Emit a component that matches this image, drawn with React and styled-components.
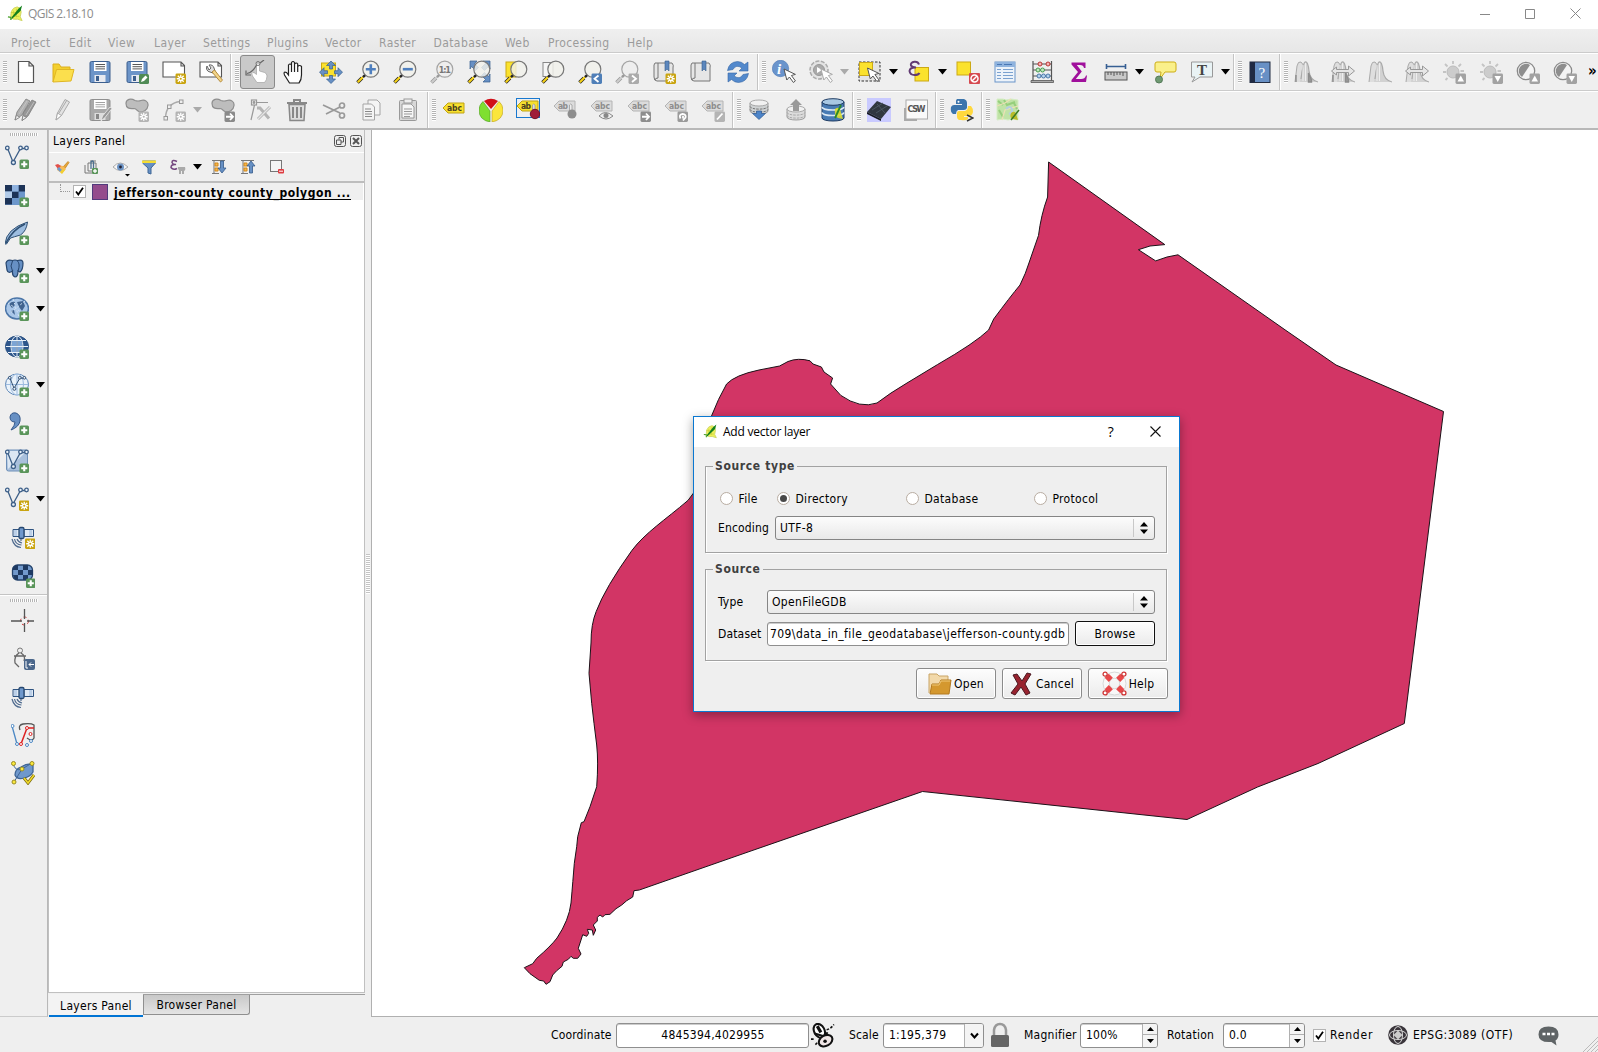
import React from 'react';
import styled, { createGlobalStyle, css } from 'styled-components';

const ui = "'DejaVu Sans Condensed', 'DejaVu Sans', sans-serif";
const caption = "'Open Sans', 'Noto Sans', sans-serif";

const Global = createGlobalStyle`
  * { box-sizing: border-box; }
  html, body { margin: 0; padding: 0; overflow: hidden; }
  body { background: #efefef; font-family: ${ui}; font-stretch: condensed; font-size: 12px; color: #000; }
`;

const Window = styled.div`
  width: 1598px; height: 1052px; display: flex; flex-direction: column;
  background: #efefef; position: relative; overflow: hidden; white-space: nowrap;
`;
const TitleBar = styled.header`
  height: 29px; flex: none; background: #fff; display: flex; align-items: center; padding: 0 17px 2px 7px;
  font: 12px ${caption}; color: #8c8c8c;
`;
const TitleText = styled.span`margin-left: 4px; flex: 1; letter-spacing: -0.55px;`;
const WindowButtons = styled.div`display: flex; gap: 35px; align-items: center;`;
const MenuBar = styled.nav`
  height: 24px; flex: none; display: flex; padding: 4px 0 0 11px; align-items: center;
  background: linear-gradient(#efefef, #e7e7e7); border-bottom: 1px solid #cbcbcb;
  color: #9b9b9b; letter-spacing: 0.4px;
`;
const MenuItem = styled.span`width: ${p => p.$w}px; flex: none;`;
const ToolRow = styled.div`
  height: ${p => p.$h || 38}px; flex: none; display: flex; border-top: 1px solid #fff;
  border-bottom: ${p => (p.$last ? 2 : 1)}px solid ${p => (p.$last ? '#b8b8b8' : '#cbcbcb')};
`;
const ToolGroup = styled.div`
  display: flex; align-items: center; flex: none; height: 100%;
  ${p => p.$sep && css`border-left: 1px solid #c4c4c4; box-shadow: inset 1px 0 #fff;`}
`;
const Handle = styled.i`
  width: 4px; height: 22px; margin: 0 ${p => (p.$first ? '0.5px 0 3px' : '0 0 4px')}; flex: none;
  background: repeating-linear-gradient(#b4b4b4 0 1px, #fff 1px 2px);
`;
const ToolButton = styled.button`
  width: 37px; height: 36px; padding: 0; border: 0; background: none; flex: none;
  display: grid; place-items: center;
  svg { display: block; }
  ${p => p.$on && css`
    width: 35px; height: 34px; margin: 0 1px; border: 1px solid #8a8a8a; border-radius: 3px; background: #c9c9c9;
  `}
`;
const ArrowBox = styled.span`width: 12.1px; flex: none; display: flex; justify-content: flex-start;`;
const Overflow = styled.span`font: bold 15px ${ui}; margin: -3px 0 0 4px; align-self: center;`;

const Main = styled.div`flex: 1; min-height: 0; display: flex;`;
const SideBar = styled.aside`
  width: 48px; flex: none; border-right: 1px solid #b8b8b8; display: flex; flex-direction: column;
  border-bottom: 1px solid #cbcbcb;
`;
const SideHandle = styled.i`
  width: 28px; height: 3px; margin: 3px 0 ${p => (p.$second ? 0 : 1.5)}px 10px; flex: none;
  background: repeating-linear-gradient(90deg, #b4b4b4 0 1px, #fff 1px 2px);
`;
const SideRule = styled.i`height: 2px; border-top: 1px solid #c4c4c4; background: #fff; flex: none; margin-top: -0.7px;`;
const SideRow = styled.div`
  height: 38.1px; flex: none; display: flex; align-items: center; padding-left: ${p => (p.$shift ? 11 : 5)}px; gap: 7px;
`;
const Dock = styled.section`width: 317px; flex: none; display: flex; flex-direction: column;`;
const DockFrame = styled.div`
  flex: 1; min-height: 0; display: flex; flex-direction: column;
  border: 1px solid #c0c0c0; border-top: 0; margin-bottom: 1px;
`;
const DockTitle = styled.div`
  height: 23px; flex: none; display: flex; align-items: center; padding: 0 2px 0 4px; border-bottom: 1px solid #fff;
  gap: 4px; span { flex: 1; letter-spacing: 0.35px; }
`;
const DockTools = styled.div`
  height: 30px; flex: none; display: flex; align-items: center; padding: 0 0 0 5px; gap: 9px;
  border-bottom: 2px solid #bdbdbd;
`;
const DockIcon = styled.span`
  width: ${p => p.$w || 20}px; display: flex; align-items: center; gap: 6px; flex: none;
`;
const Tree = styled.div`flex: 1; background: #fff; min-height: 0;`;
const TreeItem = styled.div`
  height: 17px; background: #efefef; display: flex; align-items: center; padding-left: 11px; margin-right: 1px;
`;
const Branch = styled.i`width: 10px; height: 8px; margin: -7px 3px 0 0; border-left: 1px dotted #999; border-bottom: 1px dotted #999;`;
const Swatch = styled.i`width: 16px; height: 16px; background: #944c8c; border: 1px solid #513b7c; margin: 0 6px 0 6px; flex: none;`;
const LayerName = styled.b`
  letter-spacing: 0.6px; border-bottom: 1px solid #000; line-height: 12px; height: 13px; margin-top: 3px;
`;
const Box = styled.span`
  width: 13px; height: 13px; background: #fff; border: 1px solid #b3b3b3; display: grid; place-items: center; flex: none;
`;
const Tabs = styled.div`height: 23px; flex: none; display: flex; align-items: flex-start; border-top: 1px solid #9f9f9f; margin-left: 1px;`;
const Tab = styled.div`
  height: ${p => (p.$on ? 23 : 20)}px; width: ${p => p.$w}px; text-align: center; line-height: ${p => (p.$on ? 24 : 20)}px;
  letter-spacing: 0.3px; margin-top: ${p => (p.$on ? -1 : 0)}px;
  ${p => p.$on
    ? css`background: #f3f3f3; border-bottom: 2px solid #0074d4;`
    : css`background: linear-gradient(#c8c8c8, #e4e4e4); border: 1px solid #8f8f8f; border-top: 0; border-radius: 0 0 3px 0;`}
`;
const Splitter = styled.div`width: 6px; flex: none; display: grid; place-items: center;`;
const SplitDots = styled.i`width: 4px; height: 40px; background: repeating-linear-gradient(#c4c4c4 0 1px, #fff 1px 2px);`;
const Canvas = styled.main`flex: 1; background: #fff; border-left: 1px solid #b0b0b0; border-bottom: 1px solid #b0b0b0; svg { display: block; }`;

const StatusBar = styled.footer`
  height: 35px; flex: none; display: flex; align-items: center; padding: 1px 0 0 551px;
`;
const Label = styled.span`
  width: ${p => p.$w}px; flex: none; letter-spacing: ${p => p.$ls ?? 0.15}px; padding-left: ${p => p.$pl || 0}px;
`;
const Field = styled.div`
  width: ${p => p.$w}px; height: ${p => p.$h || 25}px; flex: none; background: #fff;
  border: 1px solid #8f8f8f; border-radius: 3px; display: flex; align-items: center; overflow: hidden;
  box-shadow: inset 0 1px #ccc;
  > span { flex: 1; padding: 0 4px 0 5px; letter-spacing: 0.25px; text-align: ${p => (p.$center ? 'center' : 'left')}; }
`;
const PathText = styled.span`&& { padding: 0 0 0 2px; letter-spacing: 0.41px; }`;
const Spin = styled.div`
  width: ${p => (p.$drop ? 19 : 15)}px; height: 100%; background: #f4f4f4; border-left: 1px solid #b0b0b0; display: grid; place-items: center; flex: none;
  ${p => !p.$drop && css`grid-template-rows: 1fr 1fr; > :first-child { border-bottom: 1px solid #b0b0b0; }`}
  > div { width: 100%; height: 100%; display: grid; place-items: center; }
`;
const StatusIcon = styled.span`width: ${p => p.$w}px; flex: none; display: flex;`;
const Gap = styled.i`width: ${p => p.$w}px; flex: none;`;
const Grip = styled.span`flex: 1; display: flex; justify-content: flex-end; align-self: flex-end;`;

const Dialog = styled.div`
  position: absolute; left: 693px; top: 416px; width: 487px; height: 296px; background: #efefef;
  border: 1px solid #0a78d1; box-shadow: 0 3px 10px rgba(0,0,0,.36); display: flex; flex-direction: column;
  letter-spacing: 0.2px;
`;
const DialogTitle = styled.div`
  height: 30px; flex: none; background: #fff; display: flex; align-items: center; padding: 0 18px 2px 9px;
  font: 12px ${caption}; svg { flex: none; }
  span { margin-left: 5px; flex: 1; letter-spacing: -0.22px; }
  b { font: 14px ${caption}; margin-right: 36px; }
`;
const DialogBody = styled.div`flex: 1; padding: 19px 11px 12px 11px; display: flex; flex-direction: column;`;
const Group = styled.fieldset`
  height: ${p => p.$h}px; margin: -8px 0 ${p => p.$mb}px; padding: 0 11px 0 12px; border: 1px solid #a2a2a2; min-width: 0;
  box-shadow: inset 1px 0 #fff, 1px 1px #fff; width: 462px;
  legend {
    padding: 0 2px; margin-left: -5px; font-weight: bold; color: #404040; height: 16px; line-height: 17px;
    letter-spacing: ${p => p.$ls}px;
  }
`;
const FormRow = styled.div`display: flex; align-items: center; height: 25px; margin-top: ${p => p.$mt}px; padding-left: ${p => p.$pl || 0}px;`;
const Option = styled.label`width: ${p => p.$w}px; display: flex; align-items: center; gap: 6px; flex: none; letter-spacing: 0.3px;`;
const Radio = styled.i`
  width: 13px; height: 13px; border-radius: 50%; border: 1px solid #b9ada2; background: #fff; display: grid; place-items: center;
  &::after { content: ''; width: 7px; height: 7px; border-radius: 50%; background: ${p => (p.$on ? '#484848' : 'transparent')}; }
`;
const Combo = styled.div`
  flex: 1; height: 24px; border: 1px solid #858585; border-radius: 3px; background: linear-gradient(#fcfcfc, #e9e9e9);
  display: flex; align-items: center; padding-left: 4px;
  span { flex: 1; letter-spacing: 0.35px; }
  i { width: 21px; height: 18px; border-left: 1px solid #c8c8c8; display: grid; place-items: center start; padding-left: 6px; }
`;
const PushButton = styled.button`
  width: 80px; height: ${p => p.$h || 31}px; padding: 0; font: inherit; letter-spacing: 0.25px; color: #000;
  border: 1px solid ${p => (p.$focus ? '#111' : '#8b8b8b')};
  border-radius: 3px; background: linear-gradient(#fdfdfd, #ebebeb); display: flex; align-items: center; justify-content: center;
  gap: 2px; flex: none; box-shadow: inset 0 0 0 1px #fff; margin-left: ${p => p.$ml || 0}px;
`;
const Actions = styled.div`display: flex; justify-content: flex-end; gap: 6px; margin-top: -1px;`;

/* ---------- drawing parts ---------- */
const Svg = ({ s = 24, vb = '0 0 24 24', children, ...r }) => (
  <svg width={s} height={s} viewBox={vb} fill="none" {...r}>{children}</svg>
);
const Down = ({ c = '#000', w = 9, h = 6 }) => <svg width={w} height={h} viewBox="0 0 9 6"><path d="M0 0h9L4.5 5.5z" fill={c} /></svg>;
const Up = () => <svg width="7" height="4" viewBox="0 0 7 4"><path d="M0 4h7L3.5 0z" /></svg>;
const Dn = () => <svg width="7" height="4" viewBox="0 0 7 4"><path d="M0 0h7L3.5 4z" /></svg>;
const UpDown = () => <svg width="8" height="12" viewBox="0 0 8 12"><path d="M0 4.5h8L4 0zM0 7.5h8L4 12z" /></svg>;
const Check = () => <svg width="9" height="9" viewBox="0 0 9 9"><path d="M1 4.5 3.3 7.5 8 .8" fill="none" stroke="#000" strokeWidth="1.8" /></svg>;

const Plus = ({ x = 14.5, y = 14.5, s = 9.5 }) => (
  <g transform={`translate(${x} ${y}) scale(${s / 10})`}>
    <rect width="10" height="10" rx="1.6" fill="#5a955a" /><path d="M5 1.8v6.4M1.8 5h6.4" stroke="#fff" strokeWidth="2.2" />
  </g>
);
const Star = ({ c = '#c9a410', x = 13.5, y = 13.5 }) => (
  <g transform={`translate(${x} ${y})`}>
    <rect width="10.5" height="10.5" rx="1.4" fill={c} />
    <path d="M5.25 1.2v8M1.2 5.25h8M2.3 2.3l5.9 5.9M8.2 2.3 2.3 8.2" stroke="#fff" strokeWidth="1.3" />
    <circle cx="5.25" cy="5.25" r="1.1" fill={c} />
  </g>
);
const Badge = ({ c = '#8e8e8e', d, x = 13.5, y = 13.5, fill }) => (
  <g transform={`translate(${x} ${y})`}>
    <rect width="10.5" height="10.5" rx="1.4" fill={c} /><path d={d} stroke="#fff" strokeWidth={fill ? 0 : 1.8} fill={fill ? '#fff' : 'none'} />
  </g>
);
const Lens = ({ off, children }) => (
  <g>
    <path d="M1.5 22.5 6 18" stroke={off ? '#999' : '#222'} strokeWidth="3.6" />
    <path d="M1.8 22.2 7 17" stroke={off ? '#ccc' : '#f5d117'} strokeWidth="2.2" />
    <path d="m7 17.2 2.6-2.6" stroke={off ? '#999' : '#222'} strokeWidth="2.4" />
    <circle cx="14.8" cy="9.2" r="8" fill={off ? '#eee' : '#f1f1ec'} fillOpacity=".82" stroke={off ? '#a5a5a5' : '#777'} strokeWidth="1.2" />
    {children}
  </g>
);
const Pointer = ({ x = 12, y = 9, c = '#555' }) => (
  <path transform={`translate(${x} ${y})`} d="m0 0 2.8 11 2.6-3 4 5.5 2-1.6-4-5.4 4-1.1z" fill="#fff" stroke={c} strokeWidth="1" />
);
const Floppy = ({ off }) => (
  <g>
    <rect x="2" y="1.5" width="20" height="21" rx="1.5" fill={off ? '#a9a9a9' : '#6c94c8'} stroke={off ? '#8f8f8f' : '#3c5f8e'} />
    <rect x="6" y="2" width="12.5" height="9" fill="#fff" /><path d="M7.5 4.5h9.5M7.5 6.7h9.5M7.5 8.9h9.5" stroke={off ? '#999' : '#444'} strokeWidth=".9" />
    <rect x="6.5" y="15" width="11" height="7" fill={off ? '#ddd' : '#e8eaf0'} /><rect x="8" y="16" width="3" height="5" fill={off ? '#888' : '#3c5f8e'} />
  </g>
);
const Page = () => <path d="M1 2h18l3.5 3.5V17H1z M19 2v4h4" fill="#fff" stroke="#555" strokeWidth="1.1" />;
const Blob = () => <path d="M1 5.500C1 1 6 0 10 2.500q3 1 6 0c4-1 7.500 1 7 5-.5 5-5 7-9 6-3-1-2.500-3-5-3C4 11 1 10 1 5.500z" fill="#bdbdbd" stroke="#8e8e8e" strokeWidth="1.200" />;
const Vee = ({ c = '#3d5f88', s = 1 }) => (
  <g transform={`scale(${s})`} stroke={c} strokeWidth="1.3">
    <path d="M3 4.5 8 17 15.5 3.5H20" /><g fill="#e9f1f9"><circle cx="2.3" cy="3" r="1.8" /><circle cx="8.4" cy="17.5" r="2" /><circle cx="15.5" cy="3" r="1.8" /><circle cx="21.5" cy="3" r="1.8" /></g>
  </g>
);
const Tag = ({ off, t = 'abc' }) => (
  <g>
    <path d="M1 8 6 3h16v10H6z" fill={off ? '#dcdcdc' : '#f7e02f'} stroke={off ? '#b4b4b4' : '#c0a312'} />
    <text x="5" y="11" fontSize="8.5" fontWeight="bold" fontFamily="DejaVu Sans Condensed, sans-serif" fill={off ? '#8d8d8d' : '#4a4020'} textLength={t.length * 5}>{t}</text>
  </g>
);
const Hist = ({ arrow, soft }) => (
  <g>
    <path d="M1 22q1-8 2-16 1-5 4-4 3 1 4 10l2 10z" fill="#dedede" />
    <path d="M1 22q1-8 2-16 1-5 4-4 2 1 3 7" stroke="#aaa" />
    <path d="M6 22q2-18 5-20 3-1 4 9 1 9 9 11z" fill="#d2d2d2" />
    <path d="M7 19q2-16 4-17 3-1 4 9 1 9 9 11" stroke="#aaa" strokeWidth="1.200" />
    <path d="M9 5v16M11.500 3v18" stroke="#eee" />
    {!soft && <path d="M2 22v-7M14.500 22v-9l3 7v2z" stroke="#8c8c8c" fill="#999" strokeWidth="1.400" />}
    {arrow && <path d="m.500 11 5-4v2.500h12V6l6 5-6 5v-3.500h-12V15z" fill="#e6e6e6" stroke="#999" />}
  </g>
);
const Sun = ({ d }) => (
  <g><circle cx="11" cy="12" r="6" fill="#ccc" stroke="#bbb" /><path d="M11 1v3M1 12h3M3 4l2.500 2.500M19 4l-2.500 2.500M3.500 20l2-2M18.500 11H22" stroke="#c4c4c4" strokeWidth="1.8" /><Badge c="#a2a2a2" d={d} fill /></g>
);
const Contrast = ({ d }) => (
  <g><circle cx="10" cy="11" r="8.7" fill="#f4f4f4" stroke="#8a8a8a" strokeWidth="1.3" /><path d="M14 5A7 7 0 1 0 6 17z" fill="#8e8e8e" /><Badge c="#a2a2a2" d={d} fill /></g>
);
const Cyl = ({ off, y = 0 }) => (
  <g transform={`translate(0 ${y})`}>
    <path d="M3 4v8c0 4 18 4 18 0V4" fill={off ? '#dcdcdc' : '#cfd2d3'} stroke="#8b8b8b" strokeWidth=".8" />
    <ellipse cx="12" cy="4" rx="9" ry="3" fill="#f1f1f1" stroke="#999" strokeWidth=".8" /><path d="M3 7.500c1 3.500 17 3.500 18 0M3 10.500c1 3.500 17 3.500 18 0" stroke={off ? '#aaa' : '#777'} strokeDasharray="2.500 1" />
  </g>
);
const Globe = ({ c = '#2c5283', f = '#7ba2d3' }) => (
  <g stroke="#e8f0f8"><ellipse cx="12" cy="11.500" rx="11.500" ry="10.500" fill={f} stroke={c} /><path d="M1 11.500h22M3 5.500h18M3 17.500h18M12 1v21" /><ellipse cx="12" cy="11.500" rx="6" ry="10.500" /></g>
);
const Sat = () => (
  <g transform="translate(1 0)"><path d="M1 4.500h7v7H1zM12 4.500h9.500v7H12z" fill="#dfe9f4" stroke="#2f5380" /><path d="M2 5h3v6H2zM17 5h3v6h-3z" fill="#bcd0e8" /><rect x="7" y="2.500" width="5" height="11" rx="1.500" fill="#6f98cc" stroke="#26476f" strokeWidth="1.300" /><path d="M9 14v2M0 14q2 8 9 8.500M2.500 14q1 5.500 7 6M5 14q1 3 5 4" stroke="#4e6a8e" strokeWidth="1.200" /></g>
);
const Logo = ({ s = 18 }) => (
  <Svg s={s} vb="0 0 18 18"><path d="M7 3.500q4-3 7 0l1 4-1 5 2 4-5-1.500q-7 1-7-4 0-5 3-7.500z" fill="#eef05a" stroke="#cdd563" /><path d="M7 6v7M4 8h9M5 12h8M10 4v9" stroke="#c3cc3b" strokeWidth=".8" /><path d="M16 .500 14.500 6 6 14l-2 2 1-3 7-9z" fill="#12801c" /><path d="M1 12.500l3 .500v3" stroke="#4aa029" strokeWidth="1.300" /></Svg>
);

const I = {
  new: <path d="M4.500 1.500h10.500l4.500 4.500v16.500h-15zM15 1.500V6h4.500" fill="#fff" stroke="#555" strokeWidth="1.200" />,
  open: <g><path d="M2 22V4h6l2 3h9v3" fill="#f3cf2f" stroke="#dcaf1c" /><path d="M2 22 5.500 9.500H23L20 21z" fill="#fbdf4d" stroke="#e0b623" /></g>,
  save: <Floppy />,
  saveAs: <g><Floppy /><g transform="translate(14 14)"><rect width="10" height="10" rx="1.500" fill="#4f8a55" /><path d="m2 8 1-3 3.500-3.500 2 2L5 7z" fill="#fff" /></g></g>,
  composer: <g><Page /><Star /></g>,
  manager: <g><Page /><path d="M8 6a4 4 0 0 0 3 6l3 1 2-2-1-3a4 4 0 0 0-5-3l2 3-2 2z" fill="#ddd" stroke="#666" /><path d="m13 12 8.500 10 2-1.800L15.500 10z" fill="#f3d588" stroke="#b48a3c" /></g>,
  touch: <g><path d="M12 22.500 7.500 16q-1.500-3 .5-3.500 1.500 0 3.500 2V5q0-2 1.500-2T14.500 5v6l5 1.500q2.500 1 2.500 3.500 0 4-2.500 6.500z" fill="#fff" stroke="#999" strokeWidth=".6" /><path d="M11.500 5Q8 12 2 13.500M15 3l4-3M1 10.500v4.500h5" stroke="#666" strokeWidth="1.200" /><circle cx="13" cy="3.500" r="2" stroke="#777" /></g>,
  hand: <path d="M7.500 23 2.500 15Q1 11 4.500 12.500L6.500 15V5q1.500-2 3 0V2.500q1.500-2 3 0V4q2-2 3.200 0v2.500q2-2 3.800 0V15q0 5-2.500 8z M9.500 5v7M12.500 4v8M15.700 6v6" fill="#fff" stroke="#222" strokeWidth="1.200" />,
  panSel: <g><rect x="2.500" y="3" width="14" height="13" fill="#fbe22d" stroke="#cca915" /><g fill="#6790c4" stroke="#38608f" strokeWidth=".7"><path d="M12 1l4.500 4.500h-3V9h-3V5.500h-3zM12 23.500 7.500 19h3v-3.500h3V19h3zM.500 12.200 5 7.700v3h3.500v3H5v3zM23.500 12.200 19 7.700v3h-3.500v3H19v3z" /></g></g>,
  zin: <Lens><path d="M14.800 4.200v10M9.800 9.200h10" stroke="#4f7fbe" strokeWidth="2.600" /></Lens>,
  zout: <Lens><path d="M9.800 9.200h10" stroke="#4f7fbe" strokeWidth="2.600" /></Lens>,
  z11: <Lens off><text x="8.800" y="12.500" fontSize="9" fontWeight="bold" fontFamily="DejaVu Sans Condensed, sans-serif" fill="#777" textLength="12">1:1</text></Lens>,
  zfull: <g><path d="M3 1h7L7.500 3.500l4 4-3 3-4-4L3 9zM23 1h-7l2.500 2.500-4 4 3 3 4-4L23 9zM23 22h-7l2.500-2.500-4-4 3-3 4 4L23 14z" fill="#6790c4" stroke="#38608f" strokeWidth=".7" /><Lens /></g>,
  zsel: <g><rect x="2" y="2" width="10" height="15" fill="#fbe22d" stroke="#cca915" /><Lens /></g>,
  zlay: <g><rect x="2" y="2.500" width="10" height="14" fill="#f6f6f6" stroke="#888" /><Lens /></g>,
  zlast: <g><Lens /><Badge c="#4f7fb8" d="M7 2 3 5.250 7 8.500" /></g>,
  znext: <g><Lens off /><Badge c="#ababab" d="M3.500 2l4 3.250-4 3.250" /></g>,
  bmNew: <g><path d="M3 3h17q2 2 1 5v13H5q-3 0-3-4V5z M6 3v15q-3 0-3 2" fill="#e6e6e6" stroke="#777" /><path d="M13 1h4v10l-2-2-2 2z" fill="#5c87bd" stroke="#38608f" strokeWidth=".6" /><Star /></g>,
  bm: <g><path d="M3 3h17q2 2 1 5v13H5q-3 0-3-4V5z M6 3v15q-3 0-3 2" fill="#e6e6e6" stroke="#777" /><path d="M13 1h4v10l-2-2-2 2z" fill="#5c87bd" stroke="#38608f" strokeWidth=".6" /></g>,
  refresh: <g fill="#5389cc" stroke="#3667a5" strokeWidth=".6"><path d="M1.500 10.500Q3 2 11.500 1.500q4 0 7 3L22 2v9h-9l3-3q-6-4-9 1.500z" /><path d="M22.500 13.500Q21 22 12.500 22.500q-4 0-7-3L2 22v-9h9l-3 3q6 4 9-1.500z" /></g>,
  info: <g><circle cx="8.500" cy="8.500" r="8.200" fill="#6a94cc" stroke="#4a77b5" strokeWidth=".6" /><text x="5" y="13.500" fontSize="15" fontStyle="italic" fontWeight="bold" fontFamily="Liberation Serif, serif" fill="#fff">i</text><Pointer /></g>,
  gear: <g><circle cx="10" cy="10" r="9" fill="#e3e3e3" stroke="#aaa" strokeWidth="1.500" strokeDasharray="4 1.500" /><circle cx="10" cy="10" r="5.500" fill="#aaa" stroke="#999" /><path d="m8 7 5 3-5 3z" fill="#fff" /><Pointer c="#aaa" /></g>,
  select: <g><rect x="1" y="2" width="21" height="19" fill="#e4e4e4" stroke="#333" strokeDasharray="2.500 1.500" /><rect x="1.500" y="2.500" width="13" height="13" fill="#fbe22d" stroke="#cca915" /><Pointer x={9.500} y={8} /></g>,
  epsilon: <g><rect x="8" y="7.500" width="13.500" height="13.500" fill="#fbe22d" stroke="#cca915" /><path d="M12 4.500Q11 1.500 7.500 1.800 3 2.500 4 5.500q1 2 5 2-6-.500-6.500 3.500.5 4 5 4 4 0 5-2" stroke="#623b73" strokeWidth="2" /></g>,
  deselect: <g><rect x="1" y="2" width="13.500" height="13" fill="#fbe22d" stroke="#cca915" /><rect x="13" y="13" width="11" height="11" rx="1" fill="#d64a50" /><circle cx="18.500" cy="18.500" r="3.500" stroke="#fff" strokeWidth="1.500" /><path d="m16 21 5-5" stroke="#fff" strokeWidth="1.500" /></g>,
  table: <g><rect x="2" y="2" width="20" height="20" fill="#edf3fa" stroke="#6b95c9" /><path d="M2 2h20v5H2z" fill="#8fb3de" /><path d="M4 4.500h5M11 4.500h8" stroke="#4a78b5" /><path d="M4 9.500h4M4 12.500h4M4 15.500h4M4 18.500h4M10 9.500h10M10 12.500h10M10 15.500h10M10 18.500h10" stroke="#7ba2d0" /></g>,
  abacus: <g><path d="M3 1v20M21.500 1v20M3 4h18M3 10h18M3 16h18" stroke="#555" strokeWidth="1.200" /><path d="M1 20.500h22.500v2H1z" fill="#aaa" stroke="#555" strokeWidth=".8" /><g stroke="#b33" fill="#f5b6b6"><circle cx="10" cy="4" r="2" /><circle cx="18" cy="4" r="2" /></g><g stroke="#4a9c50" fill="#bfe6bf"><circle cx="8" cy="10" r="2" /><circle cx="12.500" cy="10" r="2" /></g><g stroke="#4a78a8" fill="#b5d2ee"><circle cx="9" cy="16" r="2" /><circle cx="13.500" cy="16" r="2" /><circle cx="18" cy="16" r="2" /></g></g>,
  sigma: <path d="M4.500 2.500h14v5.500h-1.500q-.500-3-4-3H9.800l5 6.500-6 7.500h5.200q4 0 5-3.500h1l-1 6.500H4.500v-2l6.500-8L4.500 4.500z" fill="#a0109c" />,
  ruler: <g><path d="M3 6.500h18M2.500 4v5M21.500 4v5" stroke="#375f93" strokeWidth="1.600" /><rect x="1" y="12" width="22" height="8" fill="#c9c9c9" stroke="#555" /><path d="M4 12v3M7 12v3M10 12v4M13 12v3M16 12v3M19 12v4" stroke="#555" /></g>,
  tip: <g><path d="M4 2h17q2 0 2 2v6q0 2-2 2h-9l-5 7 1-7H4q-2 0-2-2V4q0-2 2-2z" fill="#faf08a" stroke="#cdae16" /><circle cx="6" cy="19.500" r="3.500" fill="#6f9a72" stroke="#557a59" /></g>,
  text: <g><path d="M1.500 2h21v15H10l-8 5 3-5H1.500z" fill="#e9f3f5" stroke="#999" /><text x="7" y="14.500" fontSize="15" fontWeight="bold" fontFamily="Liberation Serif, serif" fill="#444">T</text></g>,
  help: <g><rect x="2" y="2" width="20" height="20.500" fill="#6890c5" stroke="#222c42" /><path d="M2 2h5v20.500H2z" fill="#202a43" /><text x="10.500" y="17.500" fontSize="15" fontFamily="Liberation Serif, serif" fill="#fff">?</text></g>,
  h1: <Hist />, h2: <Hist arrow />, h3: <Hist soft />, h4: <Hist arrow soft />,
  s1: <Sun d="M5.250 2 8.500 8H2z" />, s2: <Sun d="M5.250 8.500 8.500 2.500H2z" />,
  c1: <Contrast d="M5.250 2 8.500 8H2z" />, c2: <Contrast d="M5.250 8.500 8.500 2.500H2z" />,
  pencils: <g stroke="#7c7c7c" strokeWidth=".8"><path d="M1 22 3 14 12 1l4 2-8 14z" fill="#b0b0b0" /><path d="m8 22.500 1.500-8L18 2l4 2-8 14z" fill="#979797" /><path d="m5 16 8-13M12 17l8-13" stroke="#c8c8c8" /><path d="m1 22 1.500-5 3 2.500zM8 22.500l1-5 3.500 2z" fill="#eee" /></g>,
  pencil: <g stroke="#aaa"><path d="m5 22 1.500-7L14 1.500l4.500 2.500-8 13.500z" fill="#e2e2e2" /><path d="m8 15 8-13M5 22l1.500-7 4 2.500z" fill="#fff" /></g>,
  saveEd: <g><Floppy off /><path d="m13 23 1.500-5L22 9l2 1.500-7 9z" fill="#999" stroke="#eee" strokeWidth=".8" /></g>,
  addF: <g><Blob /><Star c="#b4b4b4" /></g>,
  curve: <g><path d="M3.500 20Q4 5 18.500 3.500" stroke="#aaa" strokeWidth="1.500" /><g fill="#eee" stroke="#999"><rect x="2" y="18.500" width="3.500" height="3.500" /><rect x="5.500" y="7" width="3.500" height="3.500" /><rect x="17.500" y="2" width="3.500" height="3.500" /></g><Star c="#b4b4b4" /></g>,
  moveF: <g><Blob /><Badge c="#8a8a8a" d="M1.500 5.250H8M5.500 2l3 3.250-3 3.250" /></g>,
  node: <g stroke="#999" strokeWidth="1.200"><path d="M3 22 6.500 7M8 4.500h12" /><rect x="3.500" y="2" width="5" height="5" fill="#eee" /><circle cx="6" cy="4.500" r=".8" fill="#999" /><path d="m10 21 12-12M9 10l3 0 9 10.500" strokeWidth="3" stroke="#b4b4b4" /><path d="m10 21 12-12" stroke="#e4e4e4" /></g>,
  trash: <g stroke="#888" strokeWidth="1.500"><path d="M4 6.500h16l-1 16H5z" fill="#ddd" /><path d="M2 5h20M9 4V2h6v2M8 9v11M12 9v11M16 9v11" strokeWidth="2" /></g>,
  cut: <g stroke="#999" strokeWidth="1.700"><path d="m1 7 17 8M4 16 18 9" /><circle cx="20" cy="7.500" r="2.500" /><circle cx="20" cy="17.500" r="2.500" /></g>,
  copy: <g fill="#f4f4f4" stroke="#a4a4a4"><path d="M9 2h9l3 3v12H9z" /><path d="M4 6h8.500l3 3v13H4z" /><path d="M6 11h6M6 13.500h7M6 16h7M6 18.500h7" stroke="#888" /></g>,
  paste: <g stroke="#999"><rect x="3.500" y="2.500" width="17" height="20" rx="1" fill="#d8d8d8" /><path d="M6 6h9l3 3v11H6z" fill="#f6f6f6" /><path d="M8 11h8M8 13.500h8M8 16h8M8 18.500h6" /><rect x="8" y="1" width="8" height="4" fill="#eee" /></g>,
  abc: <g transform="translate(0 2)"><Tag /></g>,
  pie: <g><path d="M12 11 5 3Q12-1.500 19 3z" fill="#d00f18" /><path d="M11 13v11Q0 22 0 12q0-5 4-8.500z" fill="#7fdf30" stroke="#4f9b25" strokeWidth=".6" /><path d="M13 13v11q11-2 11-12 0-5-4-8.500z" fill="#fae63c" stroke="#bb9f22" strokeWidth=".6" /></g>,
  labelHi: <g><rect x=".500" y=".500" width="23" height="19" stroke="#1878cf" /><Tag t="ab" /><path d="M16.500 14V7q1-2 2.500 0v7" fill="#ddd" stroke="#999" strokeWidth=".8" /><circle cx="19" cy="16" r="4.700" fill="#a01c38" stroke="#701326" /></g>,
  l1: <g><Tag off t="ab" /><path d="M16.500 14V7q1-2 2.500 0v7" fill="#eee" stroke="#999" strokeWidth=".8" /><circle cx="19" cy="16" r="4.500" fill="#8d8d8d" /></g>,
  l2: <g><Tag off /><path d="M9 18q6-7 14 0-7 6-14 0z" fill="#eee" stroke="#888" /><circle cx="16" cy="17.500" r="2.500" fill="#888" /></g>,
  l3: <g><Tag off /><Badge d="M1.500 5.250H8M5.500 2l3 3.250-3 3.250" /></g>,
  l4: <g><Tag off /><Badge c="#9a9a9a" d="M3 7Q1 3 5 2.500 9 3 8 6L5.500 9M5.500 4.500V7" /></g>,
  l5: <g><Tag off /><Badge c="#b4b4b4" d="m2.500 8 5.500-6" /></g>,
  db1: <g><Cyl y={1} /><path d="M9.500 13h5v2.500h4L12 21.500l-6.500-6h4z" fill="#4d84c8" stroke="#234f88" strokeWidth=".6" /></g>,
  db2: <g><Cyl off y={7} /><path d="m12 1 6 6h-3v6H9V7H6z" fill="#999" /></g>,
  db3: <g><path d="M1 4v16c0 4 22 4 22 0V4" fill="#487bb4" stroke="#1f3c64" /><ellipse cx="12" cy="4" rx="11" ry="3.300" fill="#a8c7e2" stroke="#1f3c64" /><path d="M1 9c1 4 21 4 22 0M1 14.500c1 4 21 4 22 0" stroke="#dce9f4" strokeWidth="1.600" /><path d="M14 11q5-4 6 4l2 6-5-1q-4-2-3-9z" fill="#d9dc2d" fillOpacity=".9" /><path d="M20 7 14 20" stroke="#2c8a26" strokeWidth="1.800" /></g>,
  chip: <g><rect width="24" height="24" fill="#c9caff" /><path d="M0 14 10 3 24 9 14 21z" fill="#303740" /><path d="m0 14 14 7v2L0 16z" fill="#181c22" /><path d="m5 12 11-7M9 15l11-7M10 6l8 9" stroke="#4b5663" /></g>,
  csw: <g><path d="M1 10v12h12" stroke="#aaa" strokeWidth="2" /><rect x="2" y="2" width="21.500" height="19" fill="#fafafa" stroke="#aaa" /><text x="3.500" y="13.500" fontSize="9" fontWeight="bold" fontFamily="DejaVu Sans Condensed, sans-serif" fill="#555" textLength="18">CSW</text></g>,
  py: <g><path d="M7 1h7q3 1 3 4v5q-1 2-3 2H8q-2 1-2 4H3q-3-2-2-7 1-2 3-2h8V6H6V3q0-1 1-2z" fill="#3c75ac" /><path d="M9 22q-2-1-2-3v-4q0-2 2-2h6q3-1 3-5h3q2 2 2 6-1 4-4 4h-5v1h4v2q-2 2-7 1z" fill="#ffd83e" /><circle cx="8.500" cy="3.800" r="1" fill="#fff" /><path d="m17 17 6 3-6 3" stroke="#333" strokeWidth="1.500" /></g>,
  osm: <g><path d="M1 1h6l3 1 5-1 7 1v20l-6-1-4 1-5-1-6 1z" fill="#bfe3a6" stroke="#d6edc6" /><path d="M2 3l5 4M8 2l3 5 8-3M3 12l4 7M18 5l3 6" stroke="#96cf7c" strokeWidth="2" /><path d="M1 8 9 5l6-4M6 22 9 12l13-4" stroke="#ece0b5" strokeWidth="1.200" /><path d="M10 11q4-4 6 0 1 3-3 5" stroke="#b6cfe0" strokeWidth="2" /><path d="M15 15q4-3 5 1l2 6-5-1q-4-1-2-6z" fill="#b8bb2a" /><path d="m23 12-8 10" stroke="#3a7a26" strokeWidth="1.500" /></g>,
  vec: <g><Vee /><Plus /></g>,
  ras: <g><path d="M0 2h20v20H0z" fill="#6d97cb" /><path d="M0 2h7v6.500H0zM13.500 2H20v6.500h-6.500zM7 8.500h6.500V15H7zM0 15h7v6.500H0z" fill="#1d3357" /><path d="M7 2h6.500v6.500H7z" fill="#8fb2df" /><path d="M0 8.500h7V15H0z" fill="#b2cbe9" /><Plus /></g>,
  feather: <g><path d="M0 23Q1 8 22.500 1q-1 9-7 13-7 2-10 3L1.500 23z" fill="#9dbde0" stroke="#2f5074" /><path d="M1 22Q7 9 20 3" stroke="#2f5074" strokeWidth="1.500" /><Plus /></g>,
  pg: <g><path d="M1 4q1-4 6.500-2.500 2.500-1 5 0Q18 0 18 4q0 7-3 9l-2-1q0 6-3 6-3-1-2.500-6Q3 15 2 11z" fill="#6790c4" stroke="#27466f" strokeWidth="1.200" /><path d="M7.500 2q-3 5 0 10M12.500 2q3 3 .500 10" stroke="#27466f" /><Plus /></g>,
  msg: <g><ellipse cx="12" cy="11.500" rx="11.500" ry="10.500" fill="#a9c6e8" stroke="#4c76a8" strokeWidth="1.500" /><path d="M4 7q3-3 6-2v3L7 11zM12 5l6-1 2 5-3 5-3-4zM6 14l3-1 1 5z" fill="#41638f" /><path d="M3 6l16 11M8 2l6 18M20 4 4 17" stroke="#d2e2f2" strokeDasharray="2 2" /><Plus /></g>,
  wms: <g><Globe f="#2d568c" /><path d="M7 6h4.500v5H7zM13 6h4v5h-4zM7 12h4v5H7zM13 12h4v5h-4z" fill="#7da4d4" /><Plus /></g>,
  wfs: <g><Globe f="#eaf2fa" c="#5c86b7" /><path d="M1 11.500h22M12 1v21" stroke="#9cbbe0" /><ellipse cx="12" cy="11.500" rx="6.500" ry="10.500" stroke="#9cbbe0" /><g transform="translate(3 2.500)"><Vee s={0.76} c="#2e4b70" /></g><Plus /></g>,
  comma: <g><path d="M5 6q1-5 6-4 5 2 4 8-1 6-9 9 4-5 4-8-5 0-5-5z" fill="#6790c4" stroke="#34588a" /><Plus /></g>,
  vlayer: <g><rect x="1.500" y="1" width="21" height="21" rx="2" fill="#a9c0dc" stroke="#6d8fb8" /><path d="M2 2h20L3 20z" fill="#dce7f3" /><Vee /><Plus /></g>,
  newv: <g><Vee /><Star x={14} /></g>,
  gpsN: <g><Sat /><Star x={14} /></g>,
  rasB: <g><rect x="1.500" y="1" width="20" height="15" rx="5" fill="#7199cc" stroke="#24436c" strokeWidth="1.300" /><path d="M2 4q1-3 5-3v5H2zM12 1h5v5h-5zM7 6h5v5H7zM17 6h5v5h-5zM2 11h5v5q-4 0-5-5zM12 11h5v5h-5z" fill="#1e3a62" /><Plus x={15} /></g>,
  cross: <g><circle cx="13.500" cy="12" r="4" stroke="#cc3a3a" strokeDasharray="3 2.800" /><path d="M13.500 0v10M13.500 14v9M0 12h11M16 12h7" stroke="#555" strokeWidth="1.300" /></g>,
  compass: <g><circle cx="9" cy="3.500" r="2.500" stroke="#777" /><path d="M3 9h12M8 6Q3 9 4 16l4 4M10 6q5 3 3 8" stroke="#666" strokeWidth="1.300" /><rect x="13" y="12" width="11" height="11" rx="2" fill="#4b678b" /><path d="M15 14v7h2M23 17.500h-5l2-2M18 17.500l2 2" stroke="#fff" /></g>,
  gps: <Sat />,
  topo: <g><path d="M9 7q-2-5 3-6 8-1 11 1v13q-2 4-7 0" stroke="#555" strokeWidth="1.300" fill="#eee" /><path d="m1 3 5 18" stroke="#4c88c4" strokeWidth="1.300" /><path d="M10 21 16 5h7" stroke="#d22" strokeWidth="1.500" /><g fill="#fff" stroke="#d22"><circle cx="10" cy="21" r="1.500" /><circle cx="16" cy="5" r="1.500" /><circle cx="19.500" cy="11" r="1.500" /></g><g fill="#fff" stroke="#4c88c4"><circle cx="1.500" cy="3" r="1.500" /><circle cx="6" cy="21" r="1.500" /><circle cx="20" cy="18" r="1.500" /><circle cx="16" cy="22" r="1.500" /></g></g>,
  check: <g><path d="M4 14Q4 8 10 6q6-4 12-3v8q-3 5-9 6-7 2-9-3z" fill="#6f98cc" stroke="#3f6596" strokeWidth="1.300" /><path d="M2 2q2 9 9 6l10-6M11 8 3 21" stroke="#3f6596" /><g fill="#fae83c" stroke="#998b23"><circle cx="2.500" cy="2.500" r="2" /><circle cx="21" cy="2.500" r="2" /><circle cx="11" cy="8" r="2" /><circle cx="3" cy="21" r="2" /></g><path d="m13 17 4 5 6-8" stroke="#7a6b13" strokeWidth="3" /><path d="m13 17 4 5 6-8" stroke="#f3dc2a" strokeWidth="1.500" /></g>,
};

const rowOne = [
  ['new', 'open', 'save', 'saveAs', 'composer', 'manager'],
  ['touch', 'hand', 'panSel', 'zin', 'zout', 'z11', 'zfull', 'zsel', 'zlay', 'zlast', 'znext', 'bmNew', 'bm', 'refresh'],
  ['info', 'gear', '~', 'select', '>', 'epsilon', '>', 'deselect', 'table', 'abacus', 'sigma', 'ruler', '>', 'tip', 'text', '>'],
  ['help'],
  ['h1', 'h2', 'h3', 'h4', 's1', 's2', 'c1', 'c2'],
];
const rowTwo = [
  ['pencils', 'pencil', 'saveEd', 'addF', 'curve', '~', 'moveF', 'node', 'trash', 'cut', 'copy', 'paste'],
  ['abc', 'pie', 'labelHi', 'l1', 'l2', 'l3', 'l4', 'l5'],
  ['db1', 'db2', 'db3'],
  ['chip', 'csw'],
  ['py'],
  ['osm'],
];
const Groups = ({ rows }) => rows.map((g, i) => (
  <ToolGroup key={i} $sep={i > 0}>
    <Handle $first={i === 0} />
    {g.map((n, k) => (n === '>' || n === '~'
      ? <ArrowBox key={k}><Down c={n === '~' ? '#aaa' : '#000'} /></ArrowBox>
      : <ToolButton key={k} $on={n === 'touch'}><Svg>{I[n]}</Svg></ToolButton>))}
  </ToolGroup>
));

const menus = [['Project', 58], ['Edit', 39], ['View', 46], ['Layer', 49], ['Settings', 64], ['Plugins', 58], ['Vector', 54], ['Raster', 54.5], ['Database', 71.5], ['Web', 43], ['Processing', 79], ['Help', 40]];
const sideA = ['vec', 'ras', 'feather', 'pg>', 'msg>', 'wms', 'wfs>', 'comma', 'vlayer', 'newv>', 'gpsN', 'rasB'];
const sideB = ['cross', 'compass', 'gps', 'topo', 'check'];

const county = 'M1048.6 162 1164.8 244.6 1150 246 1138.4 249.7 1155.7 260.9 1167 257 1178 254.8 1286 330.500 1336 365 1443.500 411.500 1404.300 723.500 1318 763.500 1257.600 787 1187 819.500 922.500 791.500 750 851.300 639.300 890 634 890.700 632.700 897 626.700 900.700 621.700 905 616 908.700 610 914.300 605 914.700 602.700 917 600 915 597.300 917.300 597.300 921 593.300 925 595.700 930 593.300 935.300 592.300 930 587.300 929.300 588.700 933.300 586.700 936.300 582.700 934.700 581 940 578.300 948.300 581 954 577.700 958.300 573.300 958.300 571 956.300 568.300 959.300 563.300 962 562 966.300 556.700 970.700 552.700 975 550 981.700 546 984.300 543.700 981 539.300 980.300 530 973.700 524.300 967.700 532.700 963.700 536.700 958.300Q551 946 557 938 569 920 571 903 573 880 574.300 863.300L576.700 846.700 577.700 836.700 581.300 822.700 584 821.700 590 806.700 596.700 786.700Q598.500 762 596.700 745L594 723.300 591.700 703.300 589 673.300 591 643Q591 624 596.200 611.500 605 588 632 550.300C645 533 665 520 688 500.400L698 487 711.500 416 718.500 399.500 726.600 384Q735 375 759 370L779.600 366 788 361.500Q798 357.500 810 360.800L813 364 821.400 367 824 372 832.600 378 830.600 384 840.800 395.400Q860 409 877 403 890 393 907 383L937.600 364.500Q975 343 988.600 330L993.700 319Q1010 297 1020 285 1026 273 1029.300 262L1038.500 235.400Q1041 215 1047.600 197z';

export default function App() {
  return (
    <>
      <Global />
      <Window>
        <TitleBar>
          <Logo s={17} /><TitleText>QGIS 2.18.10</TitleText>
          <WindowButtons>
            <Svg s={10} vb="0 0 10 10"><path d="M0 5.500h10" stroke="#888" /></Svg>
            <Svg s={10} vb="0 0 10 10"><path d="M.500.500h9v9h-9z" stroke="#888" /></Svg>
            <Svg s={11} vb="0 0 11 11"><path d="m.500.500 10 10m0-10-10 10" stroke="#888" /></Svg>
          </WindowButtons>
        </TitleBar>
        <MenuBar>{menus.map(([m, w]) => <MenuItem key={m} $w={w}>{m}</MenuItem>)}</MenuBar>
        <ToolRow><Groups rows={rowOne} /><Overflow>»</Overflow></ToolRow>
        <ToolRow $last $h={39}><Groups rows={rowTwo} /></ToolRow>

        <Main>
          <SideBar>
            <SideHandle />
            {sideA.map(n => (
              <SideRow key={n} $shift={n === 'gpsN' || n === 'rasB'}>
                <Svg>{I[n.replace('>', '')]}</Svg>{n.endsWith('>') && <Down />}
              </SideRow>
            ))}
            <SideRule /><SideHandle $second />
            {sideB.map(n => <SideRow key={n} $shift><Svg>{I[n]}</Svg></SideRow>)}
          </SideBar>

          <Dock>
            <DockFrame>
              <DockTitle>
                <span>Layers Panel</span>
                <Svg s={12} vb="0 0 12 12"><rect x=".500" y=".500" width="11" height="11" rx="2" stroke="#555" /><path d="M5 2.500h4.500V7M2.500 5H7v4.500H2.500zM5 4.500v-2M7 7h2.500" stroke="#555" /></Svg>
                <Svg s={12} vb="0 0 12 12"><rect x=".500" y=".500" width="11" height="11" rx="2" stroke="#555" /><path d="m3 3 6 6m0-6L3 9" stroke="#555" strokeWidth="2" /></Svg>
              </DockTitle>
              <DockTools>
                <DockIcon><Svg s={16} vb="0 0 16 16"><path d="m9 8 5-5.500 1 1-4 6z" fill="#e6a838" stroke="#c48323" strokeWidth=".8" /><path d="m4 6 5 1 3 3-4 4.500L3 11z" fill="#f6b95a" /><path d="m1 6 3-1 3 2-3 3z" fill="#e2504a" /><path d="m3 10 2-2 3 3-2 2z" fill="#6c9ad2" /><path d="m6 13 3-3 2 1-3 4z" fill="#f3d02f" /></Svg></DockIcon>
                <DockIcon><Svg s={16} vb="0 0 16 16"><path d="M2 6v8h7M5 4v8h8V4zM7 2h6" stroke="#777" /><path d="M8 10V3q1.500-2 2.500 0v6" stroke="#4c7090" strokeWidth="1.300" /><Plus x={9} y={9} s={6} /></Svg></DockIcon>
                <DockIcon><Svg s={20} vb="0 0 20 20"><path d="M1 10q7-8 15 0-8 7-15 0z" fill="#f5f5f5" stroke="#aaa" /><circle cx="8.500" cy="10" r="3.500" fill="#6c93c4" /><circle cx="8.500" cy="10" r="1.400" fill="#223" /><path d="M13 17h5l-2.500 2.500z" fill="#000" /></Svg></DockIcon>
                <DockIcon><Svg s={16} vb="0 0 16 16"><path d="M1.500 2h13v2L10 9v6l-3-1V9L1.500 4z" fill="#6790c4" stroke="#3f6796" /><path d="M1 1.500h14v2.500H1z" fill="#f4dc35" /></Svg></DockIcon>
                <DockIcon $w={32}><Svg s={17} vb="0 0 17 17"><path d="M7 2.500Q2 0 2 3.500 3 6 6 5.500 1 5 1 8.500q2 3 6 1" stroke="#74477f" strokeWidth="1.500" /><path d="M8 8h7q1 3-1 4v3h-2v-3h-1v3H9v-4q-2-1-1-3z" fill="#aaa" /></Svg><Down /></DockIcon>
                <DockIcon><Svg s={16} vb="0 0 16 16"><path d="M1 1.500h13M1 14.500h7M3 2v12" stroke="#777" /><path d="M4 4h3v3H4zM4 9h3v3H4z" fill="#f7b84b" stroke="#d48a1d" /><path d="M9.500 2h3v7H15l-4 5-4-5h2.500z" fill="#6790c4" stroke="#355b8a" strokeWidth=".8" /></Svg></DockIcon>
                <DockIcon><Svg s={16} vb="0 0 16 16"><path d="M1 1.500h13M1 14.500h7M3 2v12" stroke="#777" /><path d="M4 4h3v3H4zM4 9h3v3H4z" fill="#f7b84b" stroke="#d48a1d" /><path d="M9.500 14h3V7H15l-4-5-4 5h2.500z" fill="#6790c4" stroke="#355b8a" strokeWidth=".8" /></Svg></DockIcon>
                <DockIcon><Svg s={16} vb="0 0 16 16"><rect x="1.500" y="1.500" width="11" height="11" stroke="#777" fill="#f4f4f4" /><rect x="9" y="10" width="6" height="4.500" rx="1" fill="#dd3c41" /><path d="M10 12.200h4" stroke="#fff" /></Svg></DockIcon>
              </DockTools>
              <Tree>
                <TreeItem>
                  <Branch /><Box><Check /></Box><Swatch />
                  <LayerName>jefferson-county county_polygon ...</LayerName>
                </TreeItem>
              </Tree>
            </DockFrame>
            <Tabs><Tab $on $w={94}>Layers Panel</Tab><Tab $w={107}>Browser Panel</Tab></Tabs>
          </Dock>
          <Splitter><SplitDots /></Splitter>
          <Canvas>
            <svg width="1226" height="885" viewBox="372 130 1226 885">
              <path d={county} fill="#d23565" stroke="#1c1218" strokeWidth="1" />
            </svg>
          </Canvas>
        </Main>

        <StatusBar>
          <Label $w={65}>Coordinate</Label>
          <Field $w={193} $center><span>4845394,4029955</span></Field>
          <Gap $w={2} />
          <StatusIcon $w={38}>
            <Svg s={25}><ellipse cx="8" cy="7.500" rx="5" ry="7" transform="rotate(-28 8 7.500)" fill="#fff" stroke="#111" strokeWidth="2" /><path d="m6 3 3.500 6" stroke="#111" strokeWidth="3" /><path d="m3.500 10 8 2.500M11 14l5-5" stroke="#111" strokeWidth="2" /><ellipse cx="14" cy="17" rx="7" ry="5" transform="rotate(-30 14 17)" fill="#efe6e6" stroke="#111" strokeWidth="2" /><circle cx="13.500" cy="17.500" r="1.700" fill="#111" /><path d="M15 6.500q4-1 7-5M0 15.500h3M6 19l-2 2" stroke="#111" strokeWidth="1.500" strokeDasharray="2.500 1.500" /></Svg>
          </StatusIcon>
          <Label $w={34}>Scale</Label>
          <Field $w={101}><span>1:195,379</span><Spin $drop><Svg s={9} vb="0 0 9 9"><path d="m1 2.500 3.500 4 3.500-4" stroke="#000" strokeWidth="2" /></Svg></Spin></Field>
          <StatusIcon $w={40}><svg width="32" height="26" viewBox="0 0 32 26"><path d="M10 13V8q1-6 6-6t6 6v5" fill="none" stroke="#999" strokeWidth="2.500" /><rect x="7" y="13" width="18" height="12" rx="1.500" fill="#666" /></svg></StatusIcon>
          <Label $w={56} $ls={0.25}>Magnifier</Label>
          <Field $w={78}><span>100%</span><Spin><div><Up /></div><div><Dn /></div></Spin></Field>
          <Label $w={65} $pl={9} $ls={0.25}>Rotation</Label>
          <Field $w={82}><span>0.0</span><Spin><div><Up /></div><div><Dn /></div></Spin></Field>
          <Gap $w={8} /><Box><Check /></Box><Gap $w={4} />
          <Label $w={58} $ls={0.8}>Render</Label>
          <StatusIcon $w={25}><Svg s={20} vb="0 0 20 20"><circle cx="10" cy="10" r="9.800" fill="#3a353b" /><g stroke="#d8d8d8"><ellipse cx="10" cy="10" rx="4.500" ry="8.500" /><ellipse cx="10" cy="10" rx="8.500" ry="4.500" /></g><path d="m10 5.500 4.500 4.500-4.500 4.500L5.500 10z" fill="#ccc" /></Svg></StatusIcon>
          <Label $w={125} $ls={0.5}>EPSG:3089 (OTF)</Label>
          <StatusIcon $w={22}><Svg s={21} vb="0 0 21 21"><path d="M10.500 1.500q10 0 10 8 0 4-3 6l1 5-5-3.500q-13 1-13-7.500 0-8 10-8z" fill="#5f6466" /><path d="M4.500 9h3M9 9h3M13.500 9h3" stroke="#fff" strokeWidth="2.600" /></Svg></StatusIcon>
          <Grip><Svg s={16} vb="0 0 16 16"><path d="M1 16 16 1M5 16 16 5M9 16l7-7M13 16l3-3" stroke="#bbb" /></Svg></Grip>
        </StatusBar>

        <Dialog>
          <DialogTitle>
            <Logo s={15} /><span>Add vector layer</span><b>?</b>
            <Svg s={11} vb="0 0 11 11"><path d="m.500.500 10 10m0-10-10 10" stroke="#111" strokeWidth="1.100" /></Svg>
          </DialogTitle>
          <DialogBody>
            <Group $h={95} $mb={16} $ls={0.65}>
              <legend>Source type</legend>
              <FormRow $mt={12} $pl={1.5}>
                <Option $w={57}><Radio />File</Option>
                <Option $w={129}><Radio $on />Directory</Option>
                <Option $w={128}><Radio />Database</Option>
                <Option $w={80}><Radio />Protocol</Option>
              </FormRow>
              <FormRow $mt={4}><Label $w={57}>Encoding</Label><Combo><span>UTF-8</span><i><UpDown /></i></Combo></FormRow>
            </Group>
            <Group $h={100} $mb={8} $ls={0.6}>
              <legend>Source</legend>
              <FormRow $mt={12}><Label $w={49}>Type</Label><Combo><span>OpenFileGDB</span><i><UpDown /></i></Combo></FormRow>
              <FormRow $mt={7}>
                <Label $w={49}>Dataset</Label>
                <Field $w={302} $h={24}><PathText>709\data_in_file_geodatabase\jefferson-county.gdb</PathText></Field>
                <PushButton $h={25} $focus $ml={6}>Browse</PushButton>
              </FormRow>
            </Group>
            <Actions>
              <PushButton><Svg><path d="M1 21V2h8l2 2h9v4" fill="#f2d9aa" stroke="#c9a566" /><path d="M2 22 4 12h7l2-4h10l-2 14z" fill="#d4982f" stroke="#b47a20" /><path d="M4 13h7l2-4h9" stroke="#efc878" /></Svg>Open</PushButton>
              <PushButton><Svg><path d="m3 3 4-1 5 7 5-8 4 1-6 10 5 9-4 2-5-8-6 8-4-2 7-9z" fill="#98232f" stroke="#4a1820" /></Svg>Cancel</PushButton>
              <PushButton><Svg s={25}><circle cx="12" cy="12" r="8" stroke="#f8f8f8" strokeWidth="6" /><circle cx="12" cy="12" r="11" stroke="#ccc" strokeWidth=".7" /><circle cx="12" cy="12" r="5" stroke="#ccc" strokeWidth=".7" /><g stroke="#e8484a" strokeWidth="5.500"><path d="m4.500 4.500 4 4M19.500 4.500l-4 4M4.500 19.500l4-4M19.500 19.500l-4-4" /></g><g stroke="#cf3030" fill="#fff" strokeWidth="1.200"><circle cx="3" cy="3" r="2" /><circle cx="21" cy="3" r="2" /><circle cx="3" cy="21" r="2" /><circle cx="21" cy="21" r="2" /></g></Svg>Help</PushButton>
            </Actions>
          </DialogBody>
        </Dialog>
      </Window>
    </>
  );
}
